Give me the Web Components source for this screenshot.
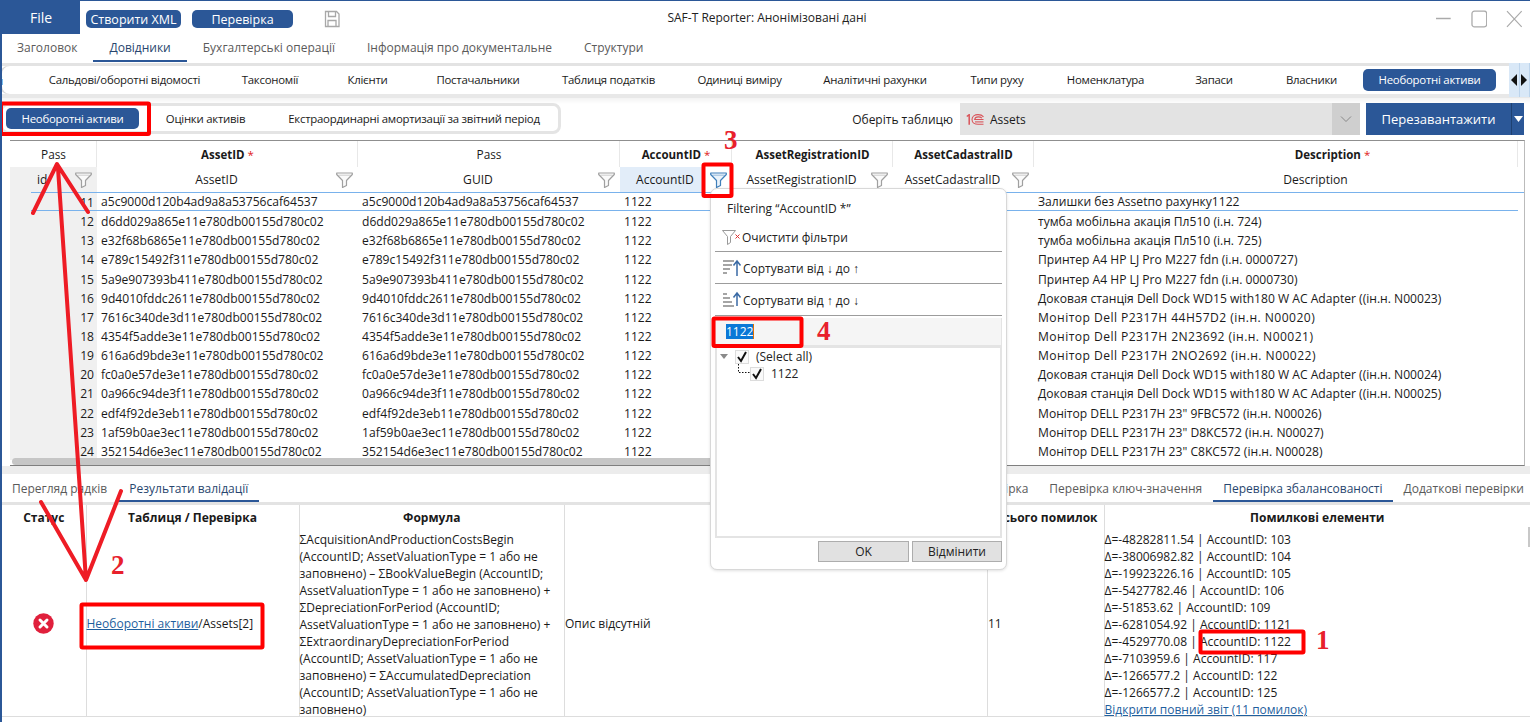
<!DOCTYPE html>
<html lang="uk"><head><meta charset="utf-8"><title>SAF-T Reporter</title>
<style>
html,body{margin:0;padding:0;background:#fff}
body{width:1530px;height:722px;overflow:hidden;font:12px "Open Sans","Noto Sans",sans-serif;color:#1a1a1a}
</style></head><body>
<saf-app></saf-app>
<script>
const FUNNEL=(c='#a0a0a0',f='#fafafa')=>`<svg width="17" height="16" viewBox="0 0 17 16"><path d="M.700 1h15.600v1.500L10.500 8.500v5l-4 2V8.500L.700 2.500z" fill="${f}" stroke="${c}" stroke-width="1.200" stroke-linejoin="round"/><path d="M2.500 3.200h12" stroke="${c}" stroke-width=".8" opacity=".6"/></svg>`;
function def(name,css,html){
  customElements.define(name,class extends HTMLElement{
    connectedCallback(){
      if(this.shadowRoot)return;
      const r=this.attachShadow({mode:'open'});
      r.innerHTML=`<style>${css}</style>${html}`;
    }
  });
}
def('saf-titlebar',`
:host{display:flex;height:33px;align-items:stretch;flex:none}
.file{width:78px;background:#2b5797;color:#fff;font-size:14px;display:flex;align-items:center;justify-content:center}
.b{background:#2b5797;color:#fff;border-radius:5px;height:18px;display:flex;align-items:center;justify-content:center;font-size:12.500px;align-self:center;margin-top:3px}
.save{margin:8px 0 0 29px}
.t{flex:1;text-align:center;line-height:33px;font-size:12px;color:#222;margin-left:-243px}
.w{display:flex;gap:19px;align-items:center;margin:2px 7px 0 0;width:88px}
`,`<div class="file">File</div>
<div class="b" style="width:95px;margin-left:6px">Створити XML</div>
<div class="b" style="width:101px;margin-left:11px">Перевірка</div>
<svg class="save" width="20" height="20" viewBox="0 0 20 20" fill="none" stroke="#a8a8a8" stroke-width="1.300"><path d="M3.500 2.500h11l2.500 2.500v12.500H3.500z"/><path d="M6.500 2.500v5h7v-5M6 17.500v-6h8v6"/></svg>
<div class="t">SAF-T Reporter: Анонімізовані дані</div>
<div class="w">
<svg width="17" height="17" viewBox="0 0 17 17"><path d="M1 8.500h15" stroke="#aaa" stroke-width="1.500"/></svg>
<svg width="17" height="18" viewBox="0 0 17 18"><rect x="1" y="1" width="15" height="16" rx="2.500" fill="none" stroke="#aaa" stroke-width="1.300"/></svg>
<svg width="17" height="18" viewBox="0 0 17 18"><path d="M1 1l15 16M16 1L1 17" stroke="#aaa" stroke-width="1.200"/></svg>
</div>`);
def('saf-tabs',`
:host{display:flex;flex:none;height:32px;box-sizing:border-box;border-bottom:3px solid #e3e3e3;justify-content:var(--just,flex-start)}
`,`<slot></slot>`);
def('saf-tab',`
:host{display:block;height:28px;box-sizing:border-box;padding:var(--tt,2px) var(--tr,16px) 0 var(--tl,16px);line-height:24px;color:#5a5a5a;font-size:12px;white-space:nowrap;border-bottom:2px solid transparent}
:host([active]){border-bottom-color:#2b5797;color:#28466e}
`,`<slot></slot>`);
def('saf-strip',`
:host{display:flex;flex:none;height:28px;background:#fff;align-items:center;border-radius:8px 0 0 8px;position:relative;box-sizing:border-box;box-shadow:inset 2px 0 0 #d8d8d8;--pill-lift:1px}
.x{width:28px;flex:none;overflow:hidden;color:#222;text-indent:-4px;font-size:11.400px}
.s{flex:1;display:flex;align-items:center}
.a{width:21px;height:34px;background:#d9e8f7;flex:none;display:flex;margin-left:13px;box-shadow:inset -1px 0 0 #b9d3ec}
.a span{flex:1;display:flex;align-items:center;justify-content:center;border-right:1px solid #bcd4ec}
`,`<div class="x">й</div><div class="s"><slot></slot></div><div class="a"><span><svg width="6" height="12"><path d="M6 0v12L0 6z" fill="#111"/></svg></span><span><svg width="6" height="12"><path d="M0 0v12l6-6z" fill="#111"/></svg></span></div>`);
def('saf-pill',`
:host{display:flex;flex:none;align-items:center;justify-content:center;height:22px;padding-bottom:var(--pill-lift,0);font-size:11.400px;letter-spacing:-.25px;color:#1a1a1a;white-space:nowrap;border-radius:5px;box-sizing:border-box}
:host([active]){background:#2b5797;color:#fff}
`,`<slot></slot>`);
def('saf-toolbar',`
:host{display:flex;flex:none;height:42px;box-sizing:border-box;padding:5px 6px 5px 0;align-items:stretch;background:linear-gradient(#f3f3f3,#fff 6px)}
.g{display:flex;width:561px;margin-left:-2px;box-sizing:border-box;border:3px solid #e4e4e4;border-radius:8px;align-items:center;padding-left:3px;background:#fff;height:31px}
.l{margin-left:auto;align-self:center;margin-right:7px;font-size:12px}
.sel{width:400px;height:32px;background:#e3e3e3;display:flex;align-items:center}
.sel span{margin-left:6px}
.sel>svg{margin-left:6px}
.dd{margin-left:auto;width:28px;height:100%;background:#cfcfcf;display:flex;align-items:center;justify-content:center}
.btn{margin-left:6px;width:158px;height:32px;background:#2b5797;color:#fff;display:flex;align-items:center;font-size:13px}
.btn b{font-weight:400;flex:1;text-align:center}
.btn i{width:12px;height:100%;border-left:1px solid #1e4172;display:flex;align-items:center;justify-content:center}
`,`<div class="g"><slot></slot></div><div class="l">Оберіть таблицю</div>
<div class="sel"><svg width="18" height="11" viewBox="0 0 18 11" fill="none" stroke="#d9545a"><path d="M.800 2.500l2.400-1.800v10" stroke-width="1.500"/><path d="M17.500 2.800C16 1 14 .6 12 .6c-3.200 0-6 1.800-6 4.800s2.800 4.900 6 4.900h5.500" stroke-width="1.100"/><path d="M16 4.200c-1-.9-2.300-1.300-3.800-1.300-1.900 0-3.300 1-3.500 2.600H17.500" stroke-width="1.100"/><path d="M9 7.900h8.500" stroke-width="1.100"/></svg><span>Assets</span><div class="dd"><svg width="12" height="8"><path d="M1 1.500l5 5 5-5" fill="none" stroke="#888" stroke-width="1"/></svg></div></div>
<div class="btn"><b>Перезавантажити</b><i><svg width="9" height="6"><path d="M0 0h9L4.500 6z" fill="#fff"/></svg></i></div>`);
const COLS=[87,261,262,112,161,141,484];
const T=COLS.map(c=>c+'px').join(' ');
const ROWS=[
[11,'a5c9000d120b4ad9a8a53756caf64537','Залишки без Assetпо рахунку1122'],
[12,'d6dd029a865e11e780db00155d780c02','тумба мобільна акація Пл510 (і.н. 724)'],
[13,'e32f68b6865e11e780db00155d780c02','тумба мобільна акація Пл510 (і.н. 725)'],
[14,'e789c15492f311e780db00155d780c02','Принтер A4 HP LJ Pro M227 fdn (і.н. 0000727)'],
[15,'5a9e907393b411e780db00155d780c02','Принтер A4 HP LJ Pro M227 fdn (і.н. 0000730)'],
[16,'9d4010fddc2611e780db00155d780c02','Доковая станція Dell Dock WD15 with180 W AC Adapter ((ін.н. N00023)'],
[17,'7616c340de3d11e780db00155d780c02','Монітор Dell P2317H 44H57D2 (ін.н. N00020)',1],
[18,'4354f5adde3e11e780db00155d780c02','Монітор Dell P2317H 2N23692 (ін.н. N00021)',1],
[19,'616a6d9bde3e11e780db00155d780c02','Монітор Dell P2317H 2NO2692 (ін.н. N00022)',1],
[20,'fc0a0e57de3e11e780db00155d780c02','Доковая станція Dell Dock WD15 with180 W AC Adapter ((ін.н. N00024)'],
[21,'0a966c94de3f11e780db00155d780c02','Доковая станція Dell Dock WD15 with180 W AC Adapter ((ін.н. N00025)'],
[22,'edf4f92de3eb11e780db00155d780c02','Монітор DELL P2317H 23" 9FBC572 (ін.н. N00026)'],
[23,'1af59b0ae3ec11e780db00155d780c02','Монітор DELL P2317H 23" D8KC572 (ін.н. N00027)'],
[24,'352154d6e3ec11e780db00155d780c02','Монітор DELL P2317H 23" C8KC572 (ін.н. N00028)']];
const names=['id','AssetID','GUID','AccountID','AssetRegistrationID','AssetCadastralID','Description'];
const h1=['Pass','<b>AssetID</b><i>*</i>','Pass','<b>AccountID</b><i>*</i>','<b>AssetRegistrationID</b>','<b>AssetCadastralID</b>','<b>Description</b><i>*</i>'];
def('saf-data-grid',`
:host{display:block;flex:none;margin:0 5px 0 8px;height:326px;border-top:1px solid #8f8f8f;border-right:1px solid #bbb;border-bottom:1px solid #7f7f7f;box-sizing:border-box;overflow:hidden;font-size:12.100px}
.head{display:grid;grid-template-columns:${T}}
.h1,.h2{display:flex;align-items:center;justify-content:center;white-space:nowrap;box-sizing:border-box}
.h1{height:26px;border-right:1px solid #e8e8e8;font-size:11.800px;padding-left:1px}
.h1.b{font-size:11.500px}
.h1 i{color:#e02020;font-style:normal;margin-left:3px}
.h1.last{padding-left:114px}
.h2{height:25px;padding-right:5px}
.h2 span{flex:1;text-align:center}
.h2.idc{justify-content:flex-start;padding-left:27px}
.h2.idc span{flex:1;text-align:left}
.h2.acc{background:linear-gradient(90deg,#e2edf9 82px,#fff 82px)}
.h2.last{padding-left:84px}
.head2{height:26px;background:linear-gradient(#79b2ec,#79b2ec) 21px 100%/100% 1.500px no-repeat,linear-gradient(#f0f0f0,#f0f0f0) 0 0/87px 100% no-repeat}
.g{display:grid;grid-template-columns:${T};grid-auto-rows:19.150px}
.c{white-space:nowrap;padding-left:4px;overflow:hidden;line-height:19px}
.n{background:#f0f0f0;text-align:right;padding-right:3px;line-height:19px}
.n.s{background:linear-gradient(#79b2ec,#79b2ec) 21px 17px/100% 1px no-repeat,#f0f0f0}
.sel{border-bottom:1px solid #79b2ec;box-sizing:border-box;height:18px;line-height:18px}
.tight{letter-spacing:.45px}
.body{height:267px;overflow:hidden}
.scroll{position:relative;height:7px;background:#c6c6c6;border-radius:4px 0 0 4px;margin:-2px 530px 0 2px}
`,`<div class="head">${h1.map((t,i)=>`<div class="h1 ${t[0]=='<'?'b':''} ${i==6?'last':''}">${t}</div>`).join('')}</div>
<div class="head head2">${names.map((t,i)=>i==6?`<div class="h2 last"><span>${t}</span></div>`:`<div class="h2 ${i==0?'idc':''} ${i==3?'acc':''}"><span>${t}</span>${i==3?FUNNEL('#3f7fba','#eaf3fb'):FUNNEL()}</div>`).join('')}</div>
<div class="body"><div class="g">${ROWS.map((r,ri)=>{const sl=ri==0?' sel':'';return `<div class="n ${ri==0?'s':''}">${r[0]}</div><div class="c${sl}">${r[1]}</div><div class="c${sl}">${r[1]}</div><div class="c${sl}">1122</div><div class="c${sl}"></div><div class="c${sl}"></div><div class="c${sl} ${r[3]?'tight':''}">${r[2]}</div>`}).join('')}</div></div><div class="scroll"></div>`);
def('saf-validation',`
:host{display:block;flex:none;position:relative;height:216px;font-size:12px}
.g{display:grid;grid-template-columns:83.500px 213px 265.500px 423px 116.500px 1fr}
.h{height:26px;font-weight:700;font-size:12px;line-height:26px;border-left:1px solid #ddd;box-sizing:border-box;white-space:nowrap;text-align:center}
.h.r{text-align:right;padding-right:6px}
.c{height:186px;border-left:1px solid #ddd;box-sizing:border-box;display:flex;align-items:center;line-height:17px;border-bottom:1px solid #ddd;white-space:nowrap}
.nb{border-left:0}
.l{align-items:flex-start}
.l div div{height:17px}
a{color:#1f5f9e;text-decoration:underline}
.ic{margin:auto;display:block}
.thumb{position:absolute;right:0;top:22px;width:2px;height:20px;background:#c8c8c8}
`,`<div class="g">
<div class="h nb">Статус</div><div class="h">Таблиця / Перевірка</div><div class="h">Формула</div><div class="h"></div><div class="h r">Всього помилок</div><div class="h">Помилкові елементи</div>
<div class="c nb"><svg class="ic" width="21" height="21" viewBox="0 0 21 21"><circle cx="10.500" cy="10.500" r="10.200" fill="#e0203c"/><path d="M7 7l7 7M14 7l-7 7" stroke="#fff" stroke-width="3" stroke-linecap="round"/></svg></div>
<div class="c"><span><a>Необоротні активи</a>/Assets[2]</span></div>
<div class="c l"><div>
<div>ΣAcquisitionAndProductionCostsBegin</div><div>(AccountID; AssetValuationType = 1 або не</div><div>заповнено) – ΣBookValueBegin (AccountID;</div><div>AssetValuationType = 1 або не заповнено) +</div><div>ΣDepreciationForPeriod (AccountID;</div><div>AssetValuationType = 1 або не заповнено) +</div><div>ΣExtraordinaryDepreciationForPeriod</div><div>(AccountID; AssetValuationType = 1 або не</div><div>заповнено) = ΣAccumulatedDepreciation</div><div>(AccountID; AssetValuationType = 1 або не</div><div>заповнено)</div></div></div>
<div class="c"><span>Опис відсутній</span></div>
<div class="c"><span>11</span></div>
<div class="c l"><div>
<div>Δ=-48282811.54 | AccountID: 103</div><div>Δ=-38006982.82 | AccountID: 104</div><div>Δ=-19923226.16 | AccountID: 105</div><div>Δ=-5427782.46 | AccountID: 106</div><div>Δ=-51853.62 | AccountID: 109</div><div>Δ=-6281054.92 | AccountID: 1121</div><div>Δ=-4529770.08 | AccountID: 1122</div><div>Δ=-7103959.6 | AccountID: 117</div><div>Δ=-1266577.2 | AccountID: 122</div><div>Δ=-1266577.2 | AccountID: 125</div><div><a>Відкрити повний звіт (11 помилок)</a></div></div></div>
</div><div class="thumb"></div>`);
const CK=`<svg width="12" height="12" viewBox="0 0 12 12"><path d="M2 6l3 4 5-9" fill="none" stroke="#111" stroke-width="2"/></svg>`;
def('saf-filter-popup',`
:host{display:block;position:absolute;left:708px;top:187px;width:297px;height:382px;background:#fff;border:1px solid #d8d8d8;border-radius:7px;box-sizing:border-box;box-shadow:0 1px 3px rgba(0,0,0,.12);padding:0 4px;font-size:12px;color:#222}
.t{height:36px;line-height:39px;padding-left:12px}
.r{display:flex;align-items:center;height:32px;box-sizing:border-box;padding:1px 0 0 7px;gap:1px;border-bottom:1px solid #9c9c9c;white-space:nowrap}
.r.first{height:27px;padding:0 0 2px 7px}
.q{margin-top:2px;height:30px;background:#f5f5f5;border-bottom:3px solid #e4e4e4;box-sizing:border-box;padding-left:10px;line-height:27px;border-left:1px solid #e4e4e4;border-right:1px solid #e4e4e4}
.q span{background:#0a78d7;color:#fff;border-right:1px solid #e07000;display:inline-block;line-height:15px}
.tree{height:190px;box-sizing:border-box;border:2px solid #e4e4e4;border-top:0;padding-left:3px}
.wrap{position:relative}
.n{display:flex;align-items:center;height:17px;gap:7px;position:relative}
.n.c{margin-left:30px}
.tri{width:0;height:0;border:4px solid transparent;border-top:5px solid #8a8a8a;border-bottom:0}
.cb{width:14px;height:14px;border:1px solid #dcdcdc;background:#fafafa;box-sizing:border-box;display:flex;align-items:center;justify-content:center}
.dots{position:absolute;left:0;top:0}
.f{display:flex;justify-content:flex-end;gap:3px;padding:3px 0 0}
.f div{height:21px;width:91px;box-sizing:border-box;border:1px solid #adadad;background:#e1e1e1;text-align:center;line-height:19px}
.f div+div{width:90px}
`,`<div class="t">Filtering “AccountID *”</div>
<div class="r first"><svg width="19" height="17" viewBox="0 0 19 17"><path d="M.500 1.500h13l-5 6v6l-3 2v-8z" fill="#fff" stroke="#999"/><path d="M13.500 5.500l4 4M17.500 5.500l-4 4" stroke="#d33" stroke-width="1"/></svg><span>Очистити фільтри</span></div>
<div class="r"><svg width="20" height="18" viewBox="0 0 20 18"><path d="M1 2h11M1 6h9M1 10h7M1 14h4" stroke="#888" stroke-width="1.300"/><path d="M15 17V3M11.500 6.500L15 2l3.500 4.500" fill="none" stroke="#3a6aa5" stroke-width="1.500"/></svg><span>Сортувати від ↓ до ↑</span></div>
<div class="r"><svg width="20" height="18" viewBox="0 0 20 18"><path d="M1 3h4M1 7h7M1 11h9M1 15h11" stroke="#888" stroke-width="1.300"/><path d="M15 15V3M11.500 6.500L15 2l3.500 4.500" fill="none" stroke="#3a6aa5" stroke-width="1.500"/></svg><span>Сортувати від ↑ до ↓</span></div>
<div class="q"><span>1122</span></div>
<div class="tree"><div class="wrap"><svg class="dots" width="40" height="30"><path d="M18.500 16v8.500h12" fill="none" stroke="#111" stroke-dasharray="1.500 1.500"/></svg>
<div class="n"><i class="tri"></i><span class="cb">${CK}</span><span>(Select all)</span></div>
<div class="n c"><span class="cb">${CK}</span><span>1122</span></div></div></div>
<div class="f"><div>OK</div><div>Відмінити</div></div>`);
def('saf-annotations',`
:host{display:block;position:absolute;left:-2px;top:-1px;width:1530px;height:722px;pointer-events:none}
svg{position:absolute;left:0;top:0}
span{position:absolute;font:700 27px/1 "Liberation Serif",serif;color:#e8202c}
`,`<svg width="1530" height="722" fill="none" stroke-linecap="round" stroke-linejoin="round">
<path d="M33 213L57 164 88 212M58 168L86 580M41 502L86 580 121 491" stroke="#ee1c25" stroke-width="4"/>
<g stroke="#ff0000" stroke-width="4">
<rect x="1" y="103.500" width="148" height="30.500" rx="1"/>
<rect x="703.500" y="164.500" width="28" height="31.500" rx="1"/>
<rect x="713.500" y="318.500" width="88" height="27.500" rx="1"/>
<rect x="81.500" y="604.500" width="181" height="43" rx="1"/>
<rect x="1200.500" y="631.500" width="103" height="21" rx="1"/>
</g></svg>
<span style="left:1316px;top:627px">1</span><span style="left:111px;top:552px">2</span><span style="left:724px;top:127px">3</span><span style="left:817px;top:318px">4</span>`);
def('saf-app',`
:host{display:flex;flex-direction:column;position:relative;width:1530px;height:722px;box-sizing:border-box;border-top:1px solid #2b5797;border-left:2px solid #2b5797;overflow:hidden}
.band{height:4px;background:#e8e8e8;flex:none}
.strip{margin-left:-2px}
.mid{height:8px;flex:none;background:#ececec}
.grp{display:flex}
.left{--tt:3px;--tl:10px;--tr:10px}
.right{--tt:3px;--tl:10.500px;--tr:10.500px;margin-right:2px}
.b{height:31px}
`,`<saf-titlebar></saf-titlebar>
<saf-tabs><saf-tab style="margin-left:-1px">Заголовок</saf-tab><saf-tab active>Довідники</saf-tab><saf-tab>Бухгалтерські операції</saf-tab><saf-tab>Інформація про документальне</saf-tab><saf-tab>Структури</saf-tab></saf-tabs>
<saf-strip class="strip">
<saf-pill style="width:193px">Сальдові/оборотні відомості</saf-pill><saf-pill style="width:98px">Таксономії</saf-pill><saf-pill style="width:97px">Клієнти</saf-pill><saf-pill style="width:124px">Постачальники</saf-pill><saf-pill style="width:137px">Таблиця податків</saf-pill><saf-pill style="width:125px">Одиниці виміру</saf-pill><saf-pill style="width:146px">Аналітичні рахунки</saf-pill><saf-pill style="width:98px">Типи руху</saf-pill><saf-pill style="width:119px">Номенклатура</saf-pill><saf-pill style="width:98px">Запаси</saf-pill><saf-pill style="width:97px">Власники</saf-pill><saf-pill active style="width:133px;margin-left:3px">Необоротні активи</saf-pill>
</saf-strip>
<div class="band"></div>
<saf-toolbar>
<saf-pill active style="width:133px;height:21px">Необоротні активи</saf-pill><saf-pill style="width:133px">Оцінки активів</saf-pill><saf-pill style="width:284px">Екстраординарні амортизації за звітний період</saf-pill>
</saf-toolbar>
<saf-data-grid></saf-data-grid>
<div class="mid"></div>
<saf-tabs class="b" style="--just:space-between">
<span class="grp left"><saf-tab>Перегляд рядків</saf-tab><saf-tab active style="--tl:12px;--tr:11px">Результати валідації</saf-tab></span>
<span class="grp right"><saf-tab>Перевірка</saf-tab><saf-tab>Перевірка ключ-значення</saf-tab><saf-tab active>Перевірка збалансованості</saf-tab><saf-tab style="--tr:4px">Додаткові перевірки</saf-tab></span>
</saf-tabs>
<saf-validation></saf-validation>
<saf-filter-popup></saf-filter-popup>
<saf-annotations></saf-annotations>`);
</script>
</body></html>
